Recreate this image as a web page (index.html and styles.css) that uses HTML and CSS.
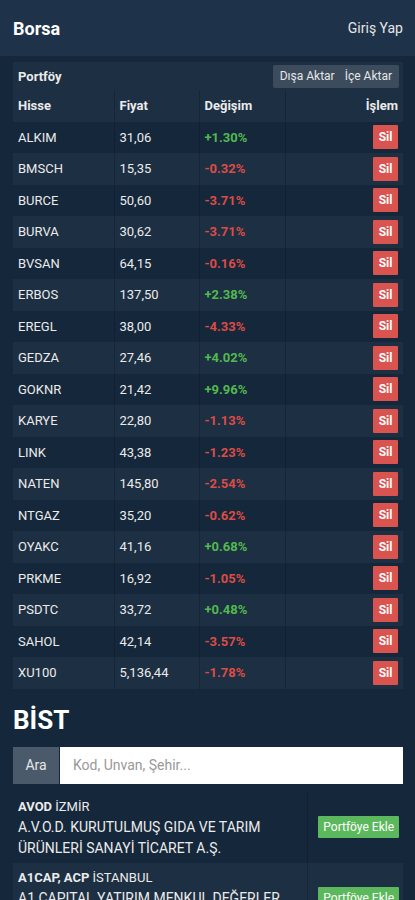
FILE: index.html
```html
<!DOCTYPE html>
<html lang="tr">
<head>
    <meta charset="UTF-8">
    <meta name="viewport" content="width=device-width, initial-scale=1.0">
    <title>Borsa</title>
    <link rel="stylesheet" href="styles.css">
</head>
<body>
    <nav class="navbar">
        <span class="brand">Borsa</span>
        <a class="login" href="#">Giriş Yap</a>
    </nav>

    <div class="container">
        <table class="portfolio">
            <colgroup>
                <col class="c1"><col class="c2"><col class="c3"><col class="c4">
            </colgroup>
            <tr class="caption-row">
                <td colspan="4">
                    <div class="caption">
                        <span class="caption-title">Portföy</span>
                        <div class="btn-group">
                            <button>Dışa Aktar</button>
                            <button>İçe Aktar</button>
                        </div>
                    </div>
                </td>
            </tr>
            <tr class="head">
                <th>Hisse</th>
                <th>Fiyat</th>
                <th>Değişim</th>
                <th class="right">İşlem</th>
            </tr>
            <tbody id="rows"></tbody>
        </table>

        <h1 class="section-title">BİST</h1>

        <div class="input-group">
            <span class="addon">Ara</span>
            <input type="text" placeholder="Kod, Unvan, Şehir...">
        </div>

        <table class="companies">
            <tr>
                <td class="info">
                    <div><strong>AVOD</strong> İZMİR</div>
                    <div class="desc">A.V.O.D. KURUTULMUŞ GIDA VE TARIM ÜRÜNLERİ SANAYİ TİCARET A.Ş.</div>
                </td>
                <td class="action"><button class="btn-add">Portföye Ekle</button></td>
            </tr>
            <tr>
                <td class="info">
                    <div><strong>A1CAP, ACP</strong> İSTANBUL</div>
                    <div class="desc">A1 CAPITAL YATIRIM MENKUL DEĞERLER A.Ş.</div>
                </td>
                <td class="action"><button class="btn-add">Portföye Ekle</button></td>
            </tr>
        </table>
    </div>

    <script>
        var stocks = [
            ['ALKIM', '31,06', '+1.30%'],
            ['BMSCH', '15,35', '-0.32%'],
            ['BURCE', '50,60', '-3.71%'],
            ['BURVA', '30,62', '-3.71%'],
            ['BVSAN', '64,15', '-0.16%'],
            ['ERBOS', '137,50', '+2.38%'],
            ['EREGL', '38,00', '-4.33%'],
            ['GEDZA', '27,46', '+4.02%'],
            ['GOKNR', '21,42', '+9.96%'],
            ['KARYE', '22,80', '-1.13%'],
            ['LINK', '43,38', '-1.23%'],
            ['NATEN', '145,80', '-2.54%'],
            ['NTGAZ', '35,20', '-0.62%'],
            ['OYAKC', '41,16', '+0.68%'],
            ['PRKME', '16,92', '-1.05%'],
            ['PSDTC', '33,72', '+0.48%'],
            ['SAHOL', '42,14', '-3.57%'],
            ['XU100', '5,136,44', '-1.78%']
        ];

        var tbody = document.getElementById('rows');
        stocks.forEach(function (s) {
            var tr = document.createElement('tr');
            var cls = s[2].charAt(0) === '+' ? 'up' : 'down';
            tr.innerHTML = '<td>' + s[0] + '</td><td>' + s[1] + '</td>' +
                '<td class="' + cls + '">' + s[2] + '</td>' +
                '<td class="right"><button class="btn-del">Sil</button></td>';
            tbody.appendChild(tr);
        });
    </script>
</body>
</html>
```

FILE: styles.css
```css
body {
    margin: 0;
    background: #15273a;
    color: #ebebeb;
    font-family: Roboto, "Liberation Sans", Arial, sans-serif;
    font-size: 13px;
}

/* Navbar */
.navbar {
    height: 56px;
    background: #1e3249;
    display: flex;
    align-items: center;
    justify-content: space-between;
    padding: 0 12px 0 13px;
}

.brand {
    font-size: 18px;
    font-weight: bold;
    color: #fff;
}

.login {
    color: #e6e6e6;
    text-decoration: none;
    font-size: 14px;
}

.container {
    padding: 6px 12px 0 13px;
}

/* Portfolio table */
table {
    width: 100%;
    border-collapse: collapse;
}

.portfolio .c1 { width: 101px; }
.portfolio .c2 { width: 85px; }
.portfolio .c3 { width: 86px; }

.portfolio td, .portfolio th {
    height: 31.5px;
    padding: 0 5px;
    box-sizing: border-box;
    text-align: left;
    border-left: 1px solid rgba(0, 0, 0, 0.18);
}

.portfolio th {
    font-weight: bold;
}

.portfolio tr td:first-child, .portfolio tr th:first-child {
    border-left: none;
}

.portfolio .caption-row td {
    height: 28px;
    background: #1d2f42;
    padding: 0 4px 0 5px;
}

.caption {
    display: flex;
    align-items: center;
    justify-content: space-between;
}

.caption-title {
    font-weight: bold;
    font-size: 13px;
}

.btn-group {
    display: flex;
    background: #3c4c5d;
    border-radius: 2px;
    padding: 0 2px;
}

.btn-group button {
    background: none;
    border: none;
    color: #e6e6e6;
    font-family: inherit;
    font-size: 12px;
    height: 23px;
    padding: 0 5px;
}

.portfolio .head th,
.portfolio tbody tr:nth-child(even) td {
    background: #1d2f42;
}

.right {
    text-align: right !important;
}

.up { color: #52b94f; font-weight: bold; }
.down { color: #dc4c46; font-weight: bold; }

.btn-del {
    background: #d9534f;
    color: #fff;
    border: none;
    border-radius: 1px;
    font-family: inherit;
    font-weight: bold;
    font-size: 12px;
    width: 25px;
    height: 24px;
    padding: 0;
    vertical-align: middle;
}

/* BIST section */
.section-title {
    margin: 16px 0 12px;
    font-size: 26px;
    font-weight: bold;
    color: #fff;
}

.input-group {
    display: flex;
    height: 37px;
}

.addon {
    width: 46px;
    background: #4a5a6b;
    color: #e6e6e6;
    font-size: 14px;
    display: flex;
    align-items: center;
    justify-content: center;
}

.input-group input {
    flex: 1;
    border: none;
    margin-left: 1px;
    padding: 0 13px;
    font-family: inherit;
    font-size: 14px;
    color: #333;
    background: #fff;
}

.input-group input::placeholder {
    color: #999;
}

.companies {
    margin-top: 8px;
}

.companies td {
    padding: 4px 5px;
    vertical-align: middle;
    line-height: 21px;
}

.companies .desc {
    font-size: 14px;
}

.companies tr:nth-child(even) td {
    background: #1d2f42;
}

.companies .info {
    width: 284px;
}

.companies .action {
    text-align: right;
    padding-right: 4px;
    border-left: 1px solid rgba(0, 0, 0, 0.18);
}

.btn-add {
    background: #5cb85c;
    color: #fff;
    border: none;
    border-radius: 1px;
    font-family: inherit;
    font-size: 12px;
    height: 22px;
    padding: 0 5px;
}
```
